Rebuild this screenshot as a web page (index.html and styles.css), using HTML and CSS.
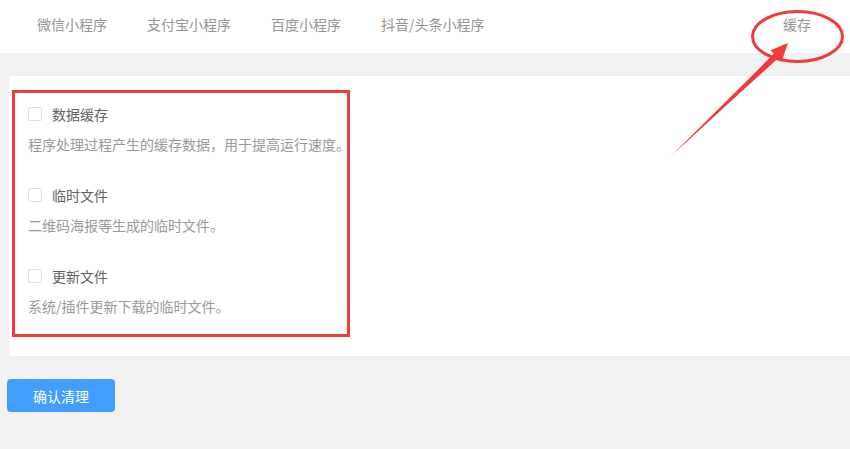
FILE: index.html
```html
<!DOCTYPE html>
<html lang="zh-CN">
<head>
<meta charset="utf-8">
<title>缓存清理</title>
<link rel="stylesheet" href="styles.css">
</head>
<body>
<header class="tabs">
  <span class="tab">微信小程序</span>
  <span class="tab">支付宝小程序</span>
  <span class="tab">百度小程序</span>
  <span class="tab">抖音/头条小程序</span>
  <span class="tab tab-cache">缓存</span>
</header>
<main class="main">
  <section class="card">
    <div class="options">
      <div class="item">
        <label class="check"><span class="box"></span><span class="label">数据缓存</span></label>
        <p class="desc">程序处理过程产生的缓存数据，用于提高运行速度。</p>
      </div>
      <div class="item">
        <label class="check"><span class="box"></span><span class="label">临时文件</span></label>
        <p class="desc">二维码海报等生成的临时文件。</p>
      </div>
      <div class="item">
        <label class="check"><span class="box"></span><span class="label">更新文件</span></label>
        <p class="desc">系统/插件更新下载的临时文件。</p>
      </div>
    </div>
  </section>
  <button class="btn">确认清理</button>
</main>
<svg class="annot" width="850" height="449" viewBox="0 0 850 449">
  <ellipse cx="797.5" cy="36.5" rx="45" ry="25" fill="none" stroke="#f23a3a" stroke-width="3"/>
  <polygon points="670,157 773.9,53.8 770.5,50.2 788,43 781.5,61.8 778.1,58.2" fill="#f23a3a"/>
</svg>
</body>
</html>
```
FILE: styles.css
```css
html, body {
  margin: 0;
  padding: 0;
}
body {
  width: 850px;
  height: 449px;
  overflow: hidden;
  background: #f2f2f2;
  font-family: "Noto Sans CJK SC", "Noto Sans", sans-serif;
  font-size: 14px;
  position: relative;
}
.tabs {
  height: 53px;
  background: #fff;
  display: flex;
  align-items: center;
  padding: 0 19px 5px 17px;
  box-sizing: border-box;
}
.tab {
  padding: 0 20px;
  color: #959595;
  line-height: 20px;
}
.tab-cache {
  margin-left: auto;
}
.main {
  padding: 22px 0 0 8px;
  overflow: hidden;
}
.card {
  margin-right: -8px;
  height: 282px;
  box-sizing: border-box;
  background: #fff;
  border: 1px solid #ebeef5;
  border-right: none;
  border-radius: 4px 0 0 4px;
  padding: 14px 0 0 3px;
}
.options {
  width: 338px;
  height: 247px;
  box-sizing: border-box;
  border: 3px solid #f23a3a;
  padding: 11px 13px 0;
}
.item + .item {
  margin-top: 31px;
}
.check {
  display: flex;
  align-items: center;
  height: 20px;
}
.box {
  width: 14px;
  height: 14px;
  box-sizing: border-box;
  border: 1px solid #dcdfe6;
  border-radius: 2px;
  background: #fff;
}
.label {
  margin-left: 10px;
  color: #606266;
  line-height: 20px;
}
.desc {
  margin: 10px 0 0;
  line-height: 20px;
  color: #999;
  white-space: nowrap;
}
.btn {
  margin-top: 22px;
  margin-left: -1px;
  width: 108px;
  height: 33px;
  border: none;
  border-radius: 4px;
  background: #409eff;
  color: #fff;
  font-family: "Noto Sans CJK SC", sans-serif;
  font-size: 14px;
  display: block;
}
.annot {
  position: absolute;
  left: 0;
  top: 0;
  pointer-events: none;
}
```
